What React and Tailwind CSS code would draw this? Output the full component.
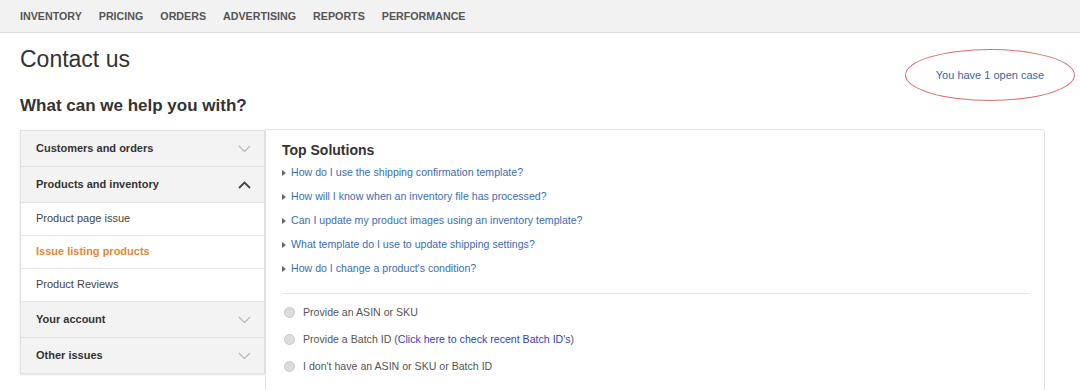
import { useState } from "react";

const navItems = ["INVENTORY", "PRICING", "ORDERS", "ADVERTISING", "REPORTS", "PERFORMANCE"];

const solutions = [
  "How do I use the shipping confirmation template?",
  "How will I know when an inventory file has processed?",
  "Can I update my product images using an inventory template?",
  "What template do I use to update shipping settings?",
  "How do I change a product's condition?",
];

function Chevron({ up }) {
  return (
    <svg width="13" height="8" viewBox="0 0 13 8" className="shrink-0">
      {up ? (
        <path d="M1 7 L6.5 1.5 L12 7" fill="none" stroke="#444" strokeWidth="1.8" />
      ) : (
        <path d="M1 1 L6.5 6.5 L12 1" fill="none" stroke="#bbb" strokeWidth="1.3" />
      )}
    </svg>
  );
}

function HeaderRow({ label, up }) {
  return (
    <div className="h-[36px] flex items-center justify-between pl-[15px] pr-[13px] bg-[#f3f3f3] border-b border-[#e0e0e0] text-[11px] font-bold text-[#333]">
      <span>{label}</span>
      <Chevron up={up} />
    </div>
  );
}

function SubRow({ label, active }) {
  return (
    <div
      className={
        active
          ? "h-[33px] pb-[2px] flex items-center pl-[15px] bg-white border-b border-[#e6e6e6] text-[11px] font-bold text-[#e8862f]"
          : "h-[33px] pb-[2px] flex items-center pl-[15px] bg-white border-b border-[#e6e6e6] text-[11px] text-[#444]"
      }
    >
      {label}
    </div>
  );
}

function Radio({ children }) {
  return (
    <label className="h-[27px] flex items-center gap-[8px] text-[10.6px] text-[#555]">
      <span className="w-[11px] h-[11px] rounded-full bg-[#dcdcdc] border border-[#c8c8c8] shrink-0" />
      <span>{children}</span>
    </label>
  );
}

export default function App() {
  const [open] = useState("Products and inventory");

  return (
    <div className="w-[1080px] h-[390px] overflow-hidden bg-white font-['Liberation_Sans',Arial,sans-serif]">
      <div className="h-[33px] bg-[#f2f2f2] border-b border-[#dcdcdc] flex items-center gap-[17px] pl-[20px]">
        {navItems.map((n) => (
          <span key={n} className="text-[10.7px] font-bold text-[#555]">
            {n}
          </span>
        ))}
      </div>

      <div className="flex justify-between pl-[20px] pr-[5px]">
        <div>
          <h1 className="text-[23px] text-[#333] mt-[12px] leading-[28px]">Contact us</h1>
          <h2 className="text-[17px] font-bold text-[#333] mt-[23px] leading-[20px]">What can we help you with?</h2>
        </div>
        <div className="mt-[16px] w-[170px] h-[52px] rounded-[50%] border border-[#d9706e] flex items-center justify-center text-[11px] text-[#3d64a8]">
          You have 1 open case
        </div>
      </div>

      <div className="flex mt-[13px] pl-[20px]">
        <div className="w-[245px] mt-[1px] self-start border border-[#e0e0e0] border-b-0 shadow-[0_1px_2px_rgba(0,0,0,0.12)]">
          <HeaderRow label="Customers and orders" />
          <HeaderRow label="Products and inventory" up={open === "Products and inventory"} />
          <SubRow label="Product page issue" />
          <SubRow label="Issue listing products" active />
          <SubRow label="Product Reviews" />
          <HeaderRow label="Your account" />
          <HeaderRow label="Other issues" />
        </div>

        <div className="w-[780px] h-[270px] border border-[#e3e3e3] rounded-tr-[3px] pl-[16px] pr-[14px] pt-[11px]">
          <h3 className="text-[14px] font-bold text-[#333] leading-[18px]">Top Solutions</h3>
          <ul className="mt-[2px]">
            {solutions.map((s) => (
              <li key={s} className="h-[24px] flex items-center gap-[5px] text-[10.6px] text-[#3b6db3]">
                <svg width="4" height="6" viewBox="0 0 4 6">
                  <path d="M0 0 L4 3 L0 6 Z" fill="#666" />
                </svg>
                <a href="#">{s}</a>
              </li>
            ))}
          </ul>
          <div className="border-t border-[#e3e3e3] mt-[12px] mb-[5px]" />
          <div className="pl-[2px]">
            <Radio>Provide an ASIN or SKU</Radio>
            <Radio>
              Provide a Batch ID (<a href="#" className="text-[#2f3fbf]">Click here to check recent Batch ID's</a>)
            </Radio>
            <Radio>I don't have an ASIN or SKU or Batch ID</Radio>
          </div>
        </div>
      </div>
    </div>
  );
}
